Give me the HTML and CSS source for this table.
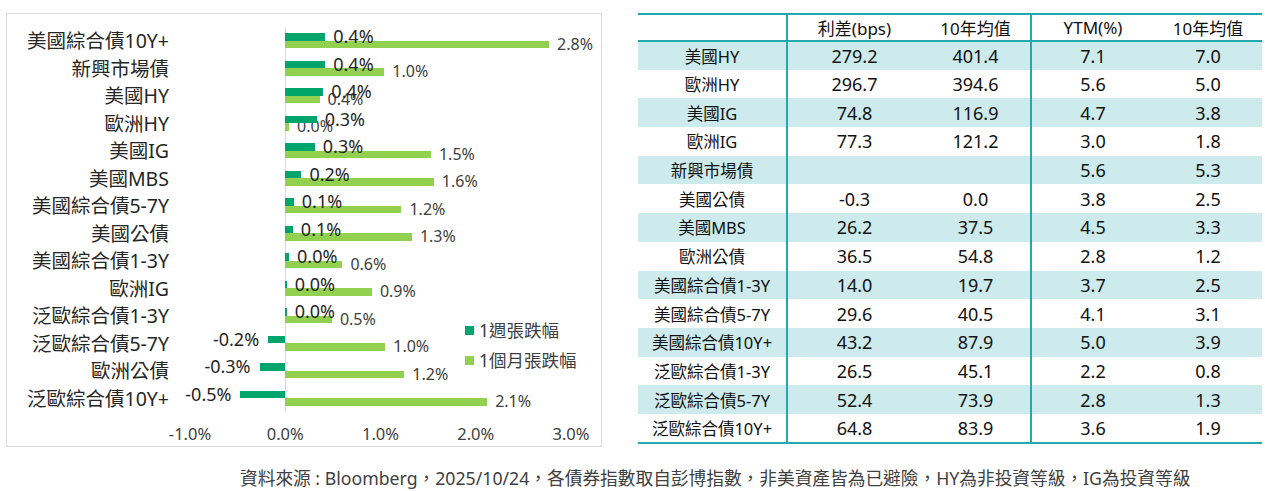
FILE: index.html
```html
<!DOCTYPE html>
<html lang="zh-Hant">
<head>
<meta charset="utf-8">
<title>債券指數</title>
<link rel="stylesheet" href="styles.css">
</head>
<body>
<div class="page">
  <div class="top">
    <div class="chart">
      <div class="rows">
        <div class="row"><div class="cat">美國綜合債10Y+</div>
          <div class="cell pos mo"><span class="bar" style="--v:2.77"></span><span class="lbl">2.8%</span></div>
          <div class="cell pos wk"><span class="bar" style="--v:0.42"></span><span class="lbl">0.4%</span></div></div>
        <div class="row"><div class="cat">新興市場債</div>
          <div class="cell pos mo"><span class="bar" style="--v:1.04"></span><span class="lbl">1.0%</span></div>
          <div class="cell pos wk"><span class="bar" style="--v:0.42"></span><span class="lbl">0.4%</span></div></div>
        <div class="row"><div class="cat">美國HY</div>
          <div class="cell pos mo"><span class="bar" style="--v:0.36"></span><span class="lbl">0.4%</span></div>
          <div class="cell pos wk"><span class="bar" style="--v:0.40"></span><span class="lbl">0.4%</span></div></div>
        <div class="row"><div class="cat">歐洲HY</div>
          <div class="cell pos mo"><span class="bar" style="--v:0.04"></span><span class="lbl">0.0%</span></div>
          <div class="cell pos wk"><span class="bar" style="--v:0.33"></span><span class="lbl">0.3%</span></div></div>
        <div class="row"><div class="cat">美國IG</div>
          <div class="cell pos mo"><span class="bar" style="--v:1.53"></span><span class="lbl">1.5%</span></div>
          <div class="cell pos wk"><span class="bar" style="--v:0.31"></span><span class="lbl">0.3%</span></div></div>
        <div class="row"><div class="cat">美國MBS</div>
          <div class="cell pos mo"><span class="bar" style="--v:1.56"></span><span class="lbl">1.6%</span></div>
          <div class="cell pos wk"><span class="bar" style="--v:0.17"></span><span class="lbl">0.2%</span></div></div>
        <div class="row"><div class="cat">美國綜合債5-7Y</div>
          <div class="cell pos mo"><span class="bar" style="--v:1.22"></span><span class="lbl">1.2%</span></div>
          <div class="cell pos wk"><span class="bar" style="--v:0.09"></span><span class="lbl">0.1%</span></div></div>
        <div class="row"><div class="cat">美國公債</div>
          <div class="cell pos mo"><span class="bar" style="--v:1.33"></span><span class="lbl">1.3%</span></div>
          <div class="cell pos wk"><span class="bar" style="--v:0.08"></span><span class="lbl">0.1%</span></div></div>
        <div class="row"><div class="cat">美國綜合債1-3Y</div>
          <div class="cell pos mo"><span class="bar" style="--v:0.60"></span><span class="lbl">0.6%</span></div>
          <div class="cell pos wk"><span class="bar" style="--v:0.04"></span><span class="lbl">0.0%</span></div></div>
        <div class="row"><div class="cat">歐洲IG</div>
          <div class="cell pos mo"><span class="bar" style="--v:0.91"></span><span class="lbl">0.9%</span></div>
          <div class="cell pos wk"><span class="bar" style="--v:0.015"></span><span class="lbl">0.0%</span></div></div>
        <div class="row"><div class="cat">泛歐綜合債1-3Y</div>
          <div class="cell pos mo"><span class="bar" style="--v:0.49"></span><span class="lbl">0.5%</span></div>
          <div class="cell pos wk"><span class="bar" style="--v:0.015"></span><span class="lbl">0.0%</span></div></div>
        <div class="row"><div class="cat">泛歐綜合債5-7Y</div>
          <div class="cell pos mo"><span class="bar" style="--v:1.05"></span><span class="lbl">1.0%</span></div>
          <div class="cell neg wk"><span class="lbl">-0.2%</span><span class="bar" style="--v:0.18"></span></div></div>
        <div class="row"><div class="cat">歐洲公債</div>
          <div class="cell pos mo"><span class="bar" style="--v:1.25"></span><span class="lbl">1.2%</span></div>
          <div class="cell neg wk"><span class="lbl">-0.3%</span><span class="bar" style="--v:0.27"></span></div></div>
        <div class="row"><div class="cat">泛歐綜合債10Y+</div>
          <div class="cell pos mo"><span class="bar" style="--v:2.12"></span><span class="lbl">2.1%</span></div>
          <div class="cell neg wk"><span class="lbl">-0.5%</span><span class="bar" style="--v:0.47"></span></div></div>
      </div>
      <div class="axis">
        <div class="ticks">
          <span class="tick"><span>-1.0%</span></span>
          <span class="tick"><span>0.0%</span></span>
          <span class="tick"><span>1.0%</span></span>
          <span class="tick"><span>2.0%</span></span>
          <span class="tick"><span>3.0%</span></span>
        </div>
      </div>
      <div class="legend">
        <div class="leg-item"><span class="sw sw-wk"></span><span>1週張跌幅</span></div>
        <div class="leg-item"><span class="sw sw-mo"></span><span>1個月張跌幅</span></div>
      </div>
    </div>

    <table class="tbl">
      <colgroup>
        <col class="c1"><col class="c2"><col class="c3"><col class="c4"><col class="c5">
      </colgroup>
      <thead>
        <tr><th class="name"></th><th class="s">利差(bps)</th><th class="s sep">10年均值</th><th class="y">YTM(%)</th><th class="y">10年均值</th></tr>
      </thead>
      <tbody>
        <tr><td class="name">美國HY</td><td class="s">279.2</td><td class="s sep">401.4</td><td class="y">7.1</td><td class="y">7.0</td></tr>
        <tr><td class="name">歐洲HY</td><td class="s">296.7</td><td class="s sep">394.6</td><td class="y">5.6</td><td class="y">5.0</td></tr>
        <tr><td class="name">美國IG</td><td class="s">74.8</td><td class="s sep">116.9</td><td class="y">4.7</td><td class="y">3.8</td></tr>
        <tr><td class="name">歐洲IG</td><td class="s">77.3</td><td class="s sep">121.2</td><td class="y">3.0</td><td class="y">1.8</td></tr>
        <tr><td class="name">新興市場債</td><td class="s"></td><td class="s sep"></td><td class="y">5.6</td><td class="y">5.3</td></tr>
        <tr><td class="name">美國公債</td><td class="s">-0.3</td><td class="s sep">0.0</td><td class="y">3.8</td><td class="y">2.5</td></tr>
        <tr><td class="name">美國MBS</td><td class="s">26.2</td><td class="s sep">37.5</td><td class="y">4.5</td><td class="y">3.3</td></tr>
        <tr><td class="name">歐洲公債</td><td class="s">36.5</td><td class="s sep">54.8</td><td class="y">2.8</td><td class="y">1.2</td></tr>
        <tr><td class="name">美國綜合債1-3Y</td><td class="s">14.0</td><td class="s sep">19.7</td><td class="y">3.7</td><td class="y">2.5</td></tr>
        <tr><td class="name">美國綜合債5-7Y</td><td class="s">29.6</td><td class="s sep">40.5</td><td class="y">4.1</td><td class="y">3.1</td></tr>
        <tr><td class="name">美國綜合債10Y+</td><td class="s">43.2</td><td class="s sep">87.9</td><td class="y">5.0</td><td class="y">3.9</td></tr>
        <tr><td class="name">泛歐綜合債1-3Y</td><td class="s">26.5</td><td class="s sep">45.1</td><td class="y">2.2</td><td class="y">0.8</td></tr>
        <tr><td class="name">泛歐綜合債5-7Y</td><td class="s">52.4</td><td class="s sep">73.9</td><td class="y">2.8</td><td class="y">1.3</td></tr>
        <tr><td class="name">泛歐綜合債10Y+</td><td class="s">64.8</td><td class="s sep">83.9</td><td class="y">3.6</td><td class="y">1.9</td></tr>
      </tbody>
    </table>
  </div>
  <p class="footer">資料來源 : Bloomberg，2025/10/24，各債券指數取自彭博指數，非美資產皆為已避險，HY為非投資等級，IG為投資等級</p>
</div>
</body>
</html>
```

FILE: styles.css
```css
* { box-sizing: border-box; }

html, body {
  margin: 0;
  padding: 0;
  background: #ffffff;
}

body {
  font-family: "Noto Sans", "Noto Sans CJK TC", sans-serif;
  color: #262626;
}

.page {
  width: 1265px;
  height: 491px;
  overflow: hidden;
}

.top {
  display: flex;
  align-items: flex-start;
  gap: 36px;
  padding: 13px 0 0 6px;
}

/* ---------- chart ---------- */
.chart {
  position: relative;
  width: 596px;
  height: 434px;
  border: 1px solid #d9d9d9;
  padding-top: 13px;
  flex: none;
}

.rows {
  display: flex;
  flex-direction: column;
}

.row {
  --unit: 95.25px;
  height: 27.5px;
  display: grid;
  grid-template-columns: 162px 21px 95.25px 1fr;
  grid-template-rows: 7.5px 7.5px;
  align-content: center;
  background-image: linear-gradient(#d9d9d9, #d9d9d9);
  background-repeat: no-repeat;
  background-size: 1px 100%;
  background-position: 278px 0;
}

.cat {
  grid-column: 1;
  grid-row: 1 / span 2;
  align-self: center;
  text-align: right;
  font-size: 19.5px;
  line-height: 15px;
  white-space: nowrap;
  color: #262626;
}

.cell {
  display: flex;
  align-items: center;
  height: 7.5px;
}

.cell.wk { grid-row: 1; }
.cell.mo { grid-row: 2; }
.cell.pos { grid-column: 4; justify-content: flex-start; }
.cell.neg { grid-column: 3; justify-content: flex-end; }

.bar {
  flex: none;
  height: 7.5px;
  width: calc(var(--v) * var(--unit));
}

.wk .bar { background: #00a56c; }
.mo .bar { background: #92d050; }

.lbl {
  flex: none;
  white-space: nowrap;
  line-height: 7.5px;
}

.wk .lbl {
  font-size: 18px;
  color: #262626;
}

.mo .lbl {
  font-size: 16px;
  color: #404040;
}

.pos .lbl { margin-left: 8px; }
.neg .lbl { margin-right: 9px; }

.axis {
  display: grid;
  grid-template-columns: 183px 381px;
  margin-top: 12px;
}

.ticks {
  grid-column: 2;
  display: flex;
  justify-content: space-between;
  font-size: 16.5px;
  line-height: 20px;
  color: #404040;
}

.tick {
  width: 0;
  display: flex;
  justify-content: center;
  white-space: nowrap;
}

.legend {
  position: absolute;
  left: 458px;
  top: 306px;
  display: flex;
  flex-direction: column;
  gap: 10px;
  font-size: 17.5px;
  line-height: 20px;
  color: #404040;
}

.leg-item {
  display: flex;
  align-items: center;
  gap: 5px;
}

.sw {
  width: 9px;
  height: 9px;
  flex: none;
}

.sw-wk { background: #00a56c; }
.sw-mo { background: #92d050; }

/* ---------- table ---------- */
.tbl {
  width: 624px;
  table-layout: fixed;
  border-collapse: collapse;
  border-top: 2px solid #21a9b0;
  border-bottom: 2px solid #21a9b0;
  flex: none;
  color: #111;
}

.c1 { width: 149px; }
.c2 { width: 122px; }
.c3 { width: 122px; }
.c4 { width: 116px; }
.c5 { width: 115px; }

.tbl th, .tbl td {
  padding: 0;
  text-align: center;
  white-space: nowrap;
}

.tbl th {
  height: 26px;
  font-size: 17px;
  font-weight: normal;
  border-bottom: 2px solid #21a9b0;
  color: #111;
}

.tbl td {
  height: 28.7px;
  font-size: 18px;
}

.tbl td.name {
  font-size: 16.5px;
}

.tbl .name { border-right: 2px solid #21a9b0; }
.tbl .sep { border-right: 2px solid #21a9b0; }
.tbl .s { padding-left: 12px; }
.tbl .y { padding-left: 7px; }

.tbl tbody tr:nth-child(odd) td { background: #cdeaec; }

/* ---------- footer ---------- */
.footer {
  margin: 19px 0 0 240px;
  font-size: 17.7px;
  line-height: 24px;
  color: #404040;
  white-space: nowrap;
}
```
